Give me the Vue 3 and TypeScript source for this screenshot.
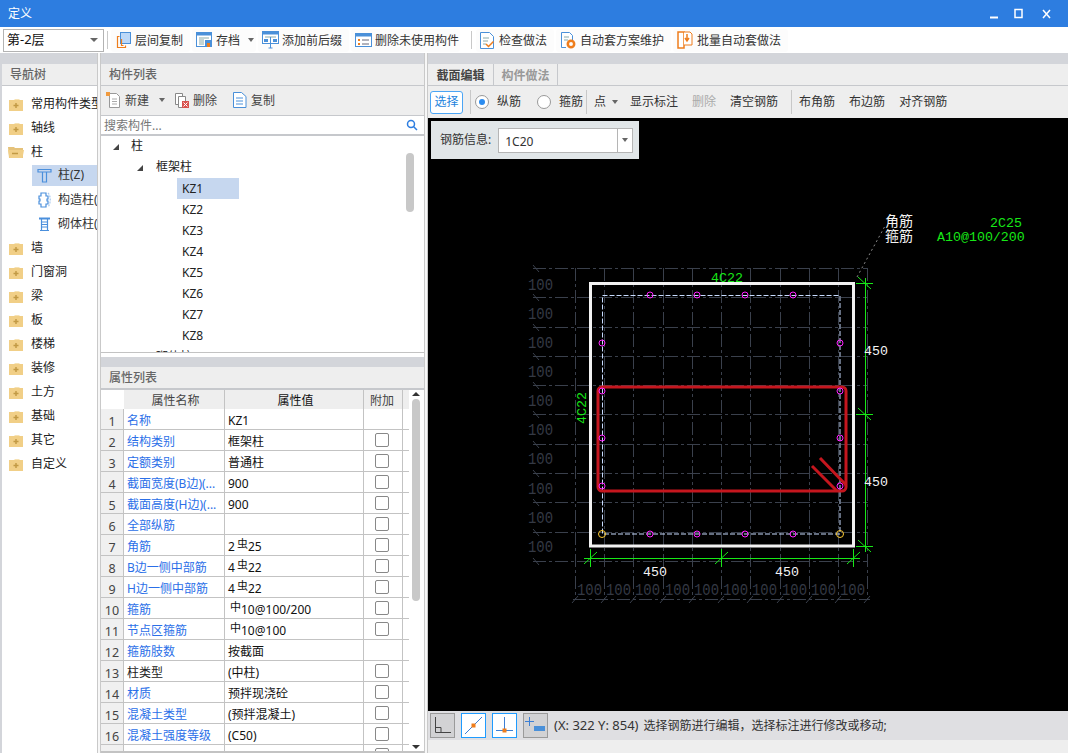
<script setup lang="ts">
const navTop = ['常用构件类型', '轴线']
const navRest = ['墙', '门窗洞', '梁', '板', '楼梯', '装修', '土方', '基础', '其它', '自定义']
const kz = ['KZ1', 'KZ2', 'KZ3', 'KZ4', 'KZ5', 'KZ6', 'KZ7', 'KZ8']

interface Row { n: number; name: string; blue: boolean; pre: string; sym: string; post: string; chk: boolean }
const mk = (n: number, name: string, pre: string, sym = '', post = '', chk = true, blue = true): Row => ({ n, name, blue, pre, sym, post, chk })
const rows: Row[] = [
  mk(1, '名称', 'KZ1', '', '', false),
  mk(2, '结构类别', '框架柱'),
  mk(3, '定额类别', '普通柱'),
  mk(4, '截面宽度(B边)(...', '900'),
  mk(5, '截面高度(H边)(...', '900'),
  mk(6, '全部纵筋', ''),
  mk(7, '角筋', '2', '虫', '25'),
  mk(8, 'B边一侧中部筋', '4', '虫', '22'),
  mk(9, 'H边一侧中部筋', '4', '虫', '22'),
  mk(10, '箍筋', '', '中', '10@100/200'),
  mk(11, '节点区箍筋', '', '中', '10@100'),
  mk(12, '箍筋肢数', '按截面', '', '', false),
  mk(13, '柱类型', '(中柱)', '', '', true, false),
  mk(14, '材质', '预拌现浇砼'),
  mk(15, '混凝土类型', '(预拌混凝土)'),
  mk(16, '混凝土强度等级', '(C50)'),
  mk(17, '', ''),
]

const hY = [268, 297, 327, 356, 385, 414, 444, 473, 502, 532, 561]
const vX = [575, 604, 633, 663, 692, 721, 750, 780, 809, 838, 867]
const leftLabels = [285, 314, 343, 372, 401, 430, 459, 489, 518, 547]
const topDots = [650, 697, 745, 793]
const sideDots = [343, 391, 438, 486]
const bottomLabels = [590, 619, 648, 678, 707, 736, 765, 795, 824, 853]
</script>

<template>
  <div class="app">
    <header class="title">
      <span class="title-text">定义</span>
      <div class="win">
        <svg width="70" height="14" viewBox="0 0 70 14">
          <path d="M0 10.500h8" stroke="#fff" stroke-width="2" />
          <rect x="25" y="2.500" width="7" height="8" fill="none" stroke="#fff" stroke-width="1.500" />
          <path d="M53 3l7 8M60 3l-7 8" stroke="#fff" stroke-width="1.500" />
        </svg>
      </div>
    </header>

    <div class="toolbar">
      <div class="floor"><span>第-2层</span><i class="arrow"></i></div>
      <i class="sep"></i>
      <div class="tbtn b1">
        <svg width="16" height="18" viewBox="0 0 16 18"><rect x="4.500" y="1.500" width="10" height="11" fill="#bcd8f8" stroke="#4a90d9" /><path d="M3.500 5.500h-2v11h8v-2M5.500 8v6.500h2" fill="none" stroke="#ee7d1c" stroke-width="1.200" /></svg>
        <span>层间复制</span>
      </div>
      <div class="tbtn b2">
        <svg width="17" height="16" viewBox="0 0 17 16"><rect x=".5" y=".5" width="15" height="14" fill="#fff" stroke="#4a90d9" /><rect x=".5" y=".5" width="15" height="3" fill="#4a90d9" /><path d="M3 6h10M3 8h5M3 10h5M3 12h5" stroke="#8aa" /><rect x="9" y="8" width="7" height="7" fill="#4a90d9" /><rect x="11" y="11" width="3" height="4" fill="#ee7d1c" /></svg>
        <span>存档</span><i class="arrow small"></i>
      </div>
      <div class="tbtn b3">
        <svg width="17" height="18" viewBox="0 0 17 18"><rect x=".5" y=".5" width="16" height="12" fill="#fff" stroke="#4a90d9" /><rect x=".5" y=".5" width="16" height="3" fill="#4a90d9" /><path d="M3 6h11" stroke="#8aa" /><rect x="2" y="8" width="4" height="3" fill="#4a90d9" /><rect x="11" y="8" width="4" height="3" fill="#4a90d9" /><path d="M8.500 6v11M6.500 17h4" stroke="#4a90d9" /></svg>
        <span>添加前后缀</span>
      </div>
      <div class="tbtn b4">
        <svg width="17" height="14" viewBox="0 0 17 14"><rect x=".5" y=".5" width="16" height="13" fill="#fff" stroke="#4a90d9" /><rect x=".5" y=".5" width="16" height="3" fill="#4a90d9" /><path d="M3 6l2 2M5 6l-2 2M3 10l2 2M5 10l-2 2" stroke="#ee7d1c" /><path d="M7 7h7M7 11h7" stroke="#667" /></svg>
        <span>删除未使用构件</span>
      </div>
      <i class="sep s2"></i>
      <div class="tbtn b5">
        <svg width="14" height="17" viewBox="0 0 14 17"><path d="M.5.5h9l4 4v12H.5z" fill="#fff" stroke="#4a90d9" /><path d="M3 6h6M3 9h5M3 12h3" stroke="#8aa" /><path d="M6 12l2.500 2.500 5-5" fill="none" stroke="#ee7d1c" stroke-width="1.500" /></svg>
        <span>检查做法</span>
      </div>
      <div class="tbtn b6">
        <svg width="15" height="17" viewBox="0 0 15 17"><path d="M.5.5h8l3 3v5M5 15.500H.5V.5" fill="#fff" stroke="#4a90d9" /><path d="M3 5h5M3 8h4" stroke="#8aa" /><circle cx="10" cy="12" r="3.200" fill="none" stroke="#ee7d1c" stroke-width="2.500" /></svg>
        <span>自动套方案维护</span>
      </div>
      <div class="tbtn b7">
        <svg width="16" height="18" viewBox="0 0 16 18"><path d="M1 1h6v16H1z" fill="#fff" stroke="#ee7d1c" stroke-width="1.500" /><path d="M7 1h6l2 2v11H7" fill="#fff" stroke="#ee7d1c" /><path d="M10 3v6M8 7l2 3 2-3" fill="none" stroke="#ee7d1c" stroke-width="1.500" /></svg>
        <span>批量自动套做法</span>
      </div>
    </div>

    <div class="main">
      <aside class="nav">
        <div class="phead">导航树</div>
        <div class="nav-body">
          <div v-for="t in navTop" :key="t" class="nrow"><svg class="fold" viewBox="0 0 14 14"><path d="M0 3h14v11H0z" fill="#f1cf87" /><path d="M0 3h5l1-1h4l1 1" fill="#f6e2b4" /><path d="M7 6v5M4.500 8.500h5" stroke="#c29a45" stroke-width="1.500" /></svg><span>{{ t }}</span></div>
          <div class="nrow"><svg class="fold open" viewBox="0 0 16 13"><path d="M0 1h6l1 1h8v10H1z" fill="#e5c27a" /><path d="M0 4h16l-1.500 8H1.500z" fill="#f1cf87" /><path d="M4 7.500h6" stroke="#c29a45" stroke-width="1.500" /></svg><span>柱</span></div>
          <div class="nsub active"><svg width="15" height="15" viewBox="0 0 15 15" fill="none" stroke="#4a8fdc" stroke-width="1.200"><path d="M1 1.500h13v2.500H1zM5.500 4v10h4V4" /></svg><span>柱(Z)</span></div>
          <div class="nsub"><svg width="15" height="16" viewBox="0 0 15 16" fill="none" stroke="#4a8fdc" stroke-width="1.200"><path d="M4 1h5v3h2v3h-1v2h1v3H9v3H4v-3H2V9h1V7H2V4h2z" /><path d="M11 1c3 3 3 10 0 14" stroke="#a9c9ee" stroke-dasharray="2 1" /></svg><span>构造柱(</span></div>
          <div class="nsub"><svg width="15" height="15" viewBox="0 0 15 15" fill="none" stroke="#4a8fdc" stroke-width="1.200"><path d="M2 1.500h11" stroke-width="2" /><path d="M3 13.500h9M4.500 2v11.500h6V2M4.500 5h6M4.500 7.500h6M4.500 10h6" /></svg><span>砌体柱(</span></div>
          <div v-for="t in navRest" :key="t" class="nrow"><svg class="fold" viewBox="0 0 14 14"><path d="M0 3h14v11H0z" fill="#f1cf87" /><path d="M0 3h5l1-1h4l1 1" fill="#f6e2b4" /><path d="M7 6v5M4.500 8.500h5" stroke="#c29a45" stroke-width="1.500" /></svg><span>{{ t }}</span></div>
        </div>
      </aside>

      <div class="vsplit"></div>

      <section class="center">
        <div class="list-panel">
          <div class="phead">构件列表</div>
          <div class="list-tools">
            <div class="lt t1"><svg width="15" height="16" viewBox="0 0 15 16"><path d="M3.500 1.500h7l3 3v11h-10z" fill="#fff" stroke="#999" /><path d="M6 7h5M6 9.500h5M6 12h5" stroke="#aaa" /><path d="M0 0h4v4H0z" fill="#f09a3e" /></svg><span>新建</span><i class="arrow small"></i></div>
            <div class="lt t2"><svg width="15" height="16" viewBox="0 0 15 16"><path d="M1.500 1.500h7v11h-7z" fill="#fff" stroke="#888" /><path d="M4.500 4.500h7v11h-7z" fill="#fff" stroke="#888" /><rect x="8" y="9" width="7" height="7" fill="#d9534f" /><path d="M9.500 10.500l4 4M13.500 10.500l-4 4" stroke="#fff" /></svg><span>删除</span></div>
            <div class="lt t3"><svg width="14" height="16" viewBox="0 0 14 16"><path d="M.5.500h8l4.500 4v11H.5z" fill="#fff" stroke="#4a90d9" /><path d="M3 6h7M3 9h7M3 12h7" stroke="#4a90d9" /></svg><span>复制</span></div>
          </div>
          <div class="search">
            <span>搜索构件...</span>
            <svg width="12" height="12" viewBox="0 0 12 12" fill="none" stroke="#2d7de0" stroke-width="1.500"><circle cx="5" cy="5" r="3.500" /><path d="M7.500 7.500l3.500 3.500" /></svg>
          </div>
          <div class="tree">
            <div class="troot"><i class="tri"></i><span>柱</span></div>
            <div class="tsub"><i class="tri"></i><span>框架柱</span></div>
            <div v-for="(k, i) in kz" :key="k" class="tleaf"><span :class="{ sel: i === 0 }">{{ k }}</span></div>
            <div class="tcut"><span>砌体柱</span></div>
            <div class="tbar"></div>
          </div>
        </div>
        <div class="hsplit"></div>

        <div class="prop-panel">
          <div class="phead">属性列表</div>
          <div class="prop-body">
            <div class="ptable">
              <div class="pr head">
                <div class="c0 blank"></div>
                <div class="c1">属性名称</div>
                <div class="c2">属性值</div>
                <div class="c3">附加</div>
                <div class="c4"></div>
              </div>
              <div v-for="r in rows" :key="r.n" class="pr">
                <div class="c0">{{ r.n }}</div>
                <div class="c1" :class="{ blue: r.blue }">{{ r.name }}</div>
                <div class="c2">{{ r.pre }}<span v-if="r.sym" class="sym">{{ r.sym }}</span>{{ r.post }}</div>
                <div class="c3"><i v-if="r.chk" class="chk"></i></div>
              </div>
            </div>
            <div class="pscroll">
              <i class="up"></i>
              <div class="thumb"></div>
              <i class="down"></i>
            </div>
          </div>
        </div>
      </section>

      <div class="vsplit"></div>

      <section class="right">
        <div class="tabs">
          <div class="tab on">截面编辑</div>
          <div class="tab">构件做法</div>
        </div>
        <div class="rtools">
          <div class="pick">选择</div>
          <i class="rsep r1"></i>
          <i class="radio checked"></i><span class="rt a1">纵筋</span>
          <i class="radio r2"></i><span class="rt a1">箍筋</span>
          <i class="rsep r3"></i>
          <span class="rt a3">点</span><i class="arrow small a4"></i>
          <span class="rt a5">显示标注</span>
          <span class="rt a6">删除</span>
          <span class="rt a7">清空钢筋</span>
          <i class="rsep r8"></i>
          <span class="rt a9">布角筋</span>
          <span class="rt a10">布边筋</span>
          <span class="rt a10">对齐钢筋</span>
        </div>
        <div class="canvas">
          <svg class="cad" viewBox="428 118 640 594" width="640" height="594">
            <g stroke="#3a404c" stroke-width="1" stroke-dasharray="13 3 3 3" fill="none">
              <path v-for="y in hY" :key="'h' + y" :d="`M533 ${y + 0.5}H868`" />
              <path v-for="x in vX" :key="'v' + x" :d="`M${x + 0.5} 268V600`" />
              <path d="M573 599.500H870" />
            </g>
            <g stroke="#3a404c" stroke-width="1" fill="none">
              <path v-for="y in hY" :key="'ht' + y" :d="`M533 ${y - 3}l6 7`" />
              <path v-for="x in vX" :key="'vt' + x" :d="`M${x - 3} 603l6 -7`" />
            </g>
            <g class="grid-text">
              <text v-for="y in leftLabels" :key="'l' + y" x="528" :y="y + 5" textLength="25" lengthAdjust="spacingAndGlyphs">100</text>
              <text v-for="x in bottomLabels" :key="'b' + x" :x="x - 13" y="595" textLength="25" lengthAdjust="spacingAndGlyphs">100</text>
            </g>

            <path d="M857 277L885 226" stroke="#8a8a8a" stroke-dasharray="2 3" fill="none" />
            <rect x="590.500" y="283.500" width="263" height="262.500" fill="none" stroke="#f2f2f2" stroke-width="3" />
            <rect x="602.500" y="295.500" width="237.500" height="238.500" fill="none" stroke="#c8dcff" stroke-dasharray="5 2" />
            <rect x="598" y="387" width="248" height="104" rx="4" fill="none" stroke="#c5161e" stroke-width="3" />
            <path d="M812 466l25 25M820 458l26 27" stroke="#c5161e" stroke-width="3" fill="none" />

            <g fill="none" stroke="#ff20ff">
              <circle v-for="x in topDots" :key="'t' + x" :cx="x" cy="295" r="3" />
              <circle v-for="x in topDots" :key="'u' + x" :cx="x" cy="534" r="3" />
              <circle v-for="y in sideDots" :key="'s' + y" cx="602" :cy="y" r="3" />
              <circle v-for="y in sideDots" :key="'r' + y" cx="840" :cy="y" r="3" />
            </g>
            <g fill="none" stroke="#ffcc33">
              <circle cx="602" cy="534" r="3.500" />
              <circle cx="840" cy="534" r="3.500" />
            </g>

            <g stroke="#17e817" stroke-width="1" fill="none">
              <path d="M865.500 278V552" />
              <path d="M856 283.500H873M856 414.500H873M856 546.500H873" />
              <path d="M858 277l13 12M858 408l13 12M858 540l13 12" />
              <path d="M584 558.500H860" />
              <path d="M590.500 549V567M721.500 549V567M853.500 549V567" />
              <path d="M584 564l13 -12M715 564l13 -12M847 564l13 -12" />
            </g>

            <g class="cad-text white">
              <text x="643" y="576">450</text>
              <text x="775" y="576">450</text>
              <text x="864" y="355">450</text>
              <text x="864" y="486">450</text>
            </g>
            <g class="cad-text green">
              <text x="711" y="282">4C22</text>
              <text transform="translate(586 424) rotate(-90)">4C22</text>
              <text x="990" y="227">2C25</text>
              <text x="937" y="241">A10@100/200</text>
            </g>
            <g class="cad-text cjk white">
              <text x="885" y="226">角筋</text>
              <text x="885" y="241">箍筋</text>
            </g>
          </svg>

          <div class="info">
            <span>钢筋信息:</span>
            <div class="combo"><span class="cv">1C20</span><span class="cb"><i class="arrow small"></i></span></div>
          </div>
        </div>
        <div class="status">
          <div class="sb"><svg width="19" height="19" viewBox="0 0 19 19" fill="none" stroke="#444"><path d="M2.500 1v15.500H18M2.500 11.500H8v5" /></svg></div>
          <div class="sb on"><svg width="19" height="19" viewBox="0 0 19 19"><path d="M1 18L18 1" stroke="#3c7fd5" /><rect x="7.500" y="7.500" width="4" height="4" fill="#ee7d1c" /></svg></div>
          <div class="sb on"><svg width="19" height="19" viewBox="0 0 19 19"><path d="M9.500 1V14M1 14.500H18" stroke="#3c7fd5" /><rect x="7.500" y="12.500" width="4" height="4" fill="#ee7d1c" /></svg></div>
          <div class="sb"><svg width="21" height="19" viewBox="0 0 21 19"><path d="M4.500 1v9M0 5.500h9" stroke="#3c7fd5" /><rect x="9" y="10" width="11" height="5" fill="#4a90d9" /></svg></div>
          <span class="msg"><span class="xy">(X: 322 Y: 854)</span>选择钢筋进行编辑，选择标注进行修改或移动;</span>
        </div>
        <div class="foot"></div>
      </section>
    </div>
  </div>
</template>

<style>
html, body { margin: 0; overflow: hidden; background: #fff; }
</style>

<style scoped>
.app {
  width: 1068px; height: 753px; display: flex; flex-direction: column;
  font: 12px/1.2 "Noto Sans", "Noto Sans CJK SC", sans-serif; color: #222; overflow: hidden;
}
i { display: block; font-style: normal; }
.title { height: 27px; background: #2d7de0; color: #fff; display: flex; align-items: center; justify-content: space-between; padding-left: 8px; flex: none; }
.title-text { padding-top: 2px; }
.win { padding-right: 8px; display: flex; }
.toolbar { height: 26px; flex: none; background: #fff; display: flex; align-items: center; box-sizing: border-box; padding-left: 3px; }
.floor { width: 101px; height: 23px; flex: none; box-sizing: border-box; border: 1px solid #b3b3b3; display: flex; align-items: center; justify-content: space-between; padding: 0 5px 0 3px; color: #111; font-size: 13px; }
.arrow { width: 0; height: 0; border-left: 4px solid transparent; border-right: 4px solid transparent; border-top: 4px solid #666; flex: none; }
.arrow.small { border-left-width: 3px; border-right-width: 3px; }
.sep { width: 1px; height: 18px; background: #c8c8c8; margin: 0 3px; flex: none; }
.tbtn { height: 23px; flex: none; display: flex; align-items: center; white-space: nowrap; gap: 3px; background: #fcfcfc; border-radius: 3px; box-sizing: border-box; padding-left: 4px; color: #333; margin-right: 2px; }
.tbtn span { padding-top: 2px; }
.tbtn svg { flex: none; }
.b1 { width: 79px; padding-left: 5px; }
.b2 { width: 64px; } .b2 .arrow { margin-left: 5px; }
.b3 { width: 91px; }
.b4 { width: 109px; }
.b5 { width: 78px; gap: 5px; }
.b6 { width: 115px; gap: 4px; padding-left: 5px; }
.b7 { width: 115px; gap: 4px; }
.s2 { margin: 0 4px 0 9px; }

.main { flex: 1; min-height: 0; display: flex; background: #d3d5da; padding: 11px 0 0 2px; box-sizing: border-box; }
.phead { flex: none; background: #eeeeee; color: #666; font-weight: 500; display: flex; align-items: center; padding: 2px 0 0 8px; border-bottom: 2px solid #c6c8cc; box-sizing: border-box; height: 23px; }
.nav { width: 95px; flex: none; background: #fff; display: flex; flex-direction: column; overflow: hidden; }
.nav .phead { height: 22px; border-bottom-width: 1px; }
.nav-body { padding-top: 6px; }
.nrow { height: 24px; display: flex; align-items: center; white-space: nowrap; color: #222; padding-left: 7px; overflow: hidden; }
.fold { width: 14px; height: 14px; flex: none; margin-right: 8px; }
.fold.open { width: 16px; height: 13px; margin-left: -1px; margin-right: 7px; }
.nsub { height: 24px; display: flex; align-items: center; margin-left: 30px; padding-left: 5px; white-space: nowrap; overflow: hidden; gap: 6px; color: #333; }
.nsub svg { flex: none; }
.nsub.active { background: #c6d7ef; height: 21px; margin-top: 1px; margin-bottom: 2px; }

.vsplit { width: 4px; flex: none; margin-top: -11px; background: #f7f7f7; border-left: 1px solid #c9c9c9; border-right: 1px solid #c9c9c9; box-sizing: border-box; }
.center { width: 323px; flex: none; display: flex; flex-direction: column; }
.hsplit { height: 14px; flex: none; box-sizing: border-box; border-top: 4px solid #fff; }
.list-panel { height: 289px; flex: none; display: flex; flex-direction: column; background: #fff; border-bottom: 1px solid #c3c3c3; box-sizing: border-box; }
.list-panel .phead { height: 22px; border-bottom-width: 1px; }
.list-tools { height: 30px; flex: none; box-sizing: border-box; background: #eeeeee; display: flex; align-items: center; border-bottom: 1px solid #c6c8cc; }
.lt { display: flex; align-items: center; gap: 4px; color: #444; }
.lt span { padding-top: 2px; }
.t1 { margin-left: 5px; }
.t1 .arrow { margin-left: 6px; }
.t2 { margin-left: 9px; }
.t3 { margin-left: 16px; }
.search { height: 20px; flex: none; box-sizing: border-box; display: flex; align-items: center; justify-content: space-between; padding: 0 6px 0 3px; color: #777; border-bottom: 2px solid #c6c8cc; background: #fff; }
.search span { padding-top: 2px; }
.tree { flex: 1; min-height: 0; position: relative; overflow: hidden; color: #222; }
.troot, .tsub { height: 21px; display: flex; align-items: center; }
.tri { width: 0; height: 0; border-style: solid; border-width: 0 0 6px 6px; border-color: transparent transparent #444 transparent; }
.troot .tri { margin-left: 12px; margin-right: 12px; }
.tsub .tri { margin-left: 36px; margin-right: 13px; }
.tleaf { height: 21px; padding-left: 76px; display: flex; }
.tleaf span { width: 57px; padding-left: 5px; line-height: 21px; }
.tleaf .sel { background: #c6d7ef; }
.tcut { height: 21px; line-height: 21px; padding-left: 55px; }
.tbar { position: absolute; left: 305px; top: 17px; width: 8px; height: 59px; background: #c8c8c8; border-radius: 4px; }
.prop-panel { flex: 1; min-height: 0; display: flex; flex-direction: column; background: #fff; border-bottom: 2px solid #c3c3c3; overflow: hidden; }
.prop-body { flex: 1; min-height: 0; display: flex; overflow: hidden; }
.ptable { width: 308px; flex: none; }
.pr { display: flex; height: 21px; box-sizing: border-box; border-bottom: 1px solid #c3c3c3; align-items: stretch; }
.pr.head { height: 19px; border-bottom: 0; background: #eee; color: #444; text-align: center; }
.pr.head > div { justify-content: center; }
.pr > div { display: flex; align-items: center; box-sizing: border-box; white-space: nowrap; overflow: hidden; padding-top: 4px; }
.c0 { width: 23px; background: #f0f0f0; color: #444; justify-content: center; border-right: 1px solid #c3c3c3; font-size: 12.500px; flex: none; }
.c0.blank { background: #fff; border-right: 0; }
.c1 { width: 101px; padding-left: 3px; border-right: 1px solid #c3c3c3; flex: none; }
.blue { color: #2b6fe8; }
.c2 { width: 139px; padding-left: 3px; border-right: 1px solid #c3c3c3; color: #111; flex: none; }
.c3 { width: 39px; justify-content: center; border-right: 1px solid #c3c3c3; flex: none; }
.pr > .c3 { padding: 0 2px 0 0; }
.pr.head > .c3 { padding-top: 4px; }
.c4 { width: 6px; flex: none; }
.sym { font-size: 11px; position: relative; top: -3px; margin: 0 0 0 2px; }
.chk { width: 14px; height: 14px; box-sizing: border-box; border: 1px solid #888; border-radius: 2px; background: #fff; }
.pscroll { width: 15px; position: relative; flex: 1; }
.pscroll .thumb { position: absolute; left: 3px; top: 9px; width: 8px; height: 202px; background: #c8c8c8; border-radius: 4px; }
.up, .down { position: absolute; left: 3px; width: 0; height: 0; border-left: 4px solid transparent; border-right: 4px solid transparent; }
.up { top: 2px; border-bottom: 4px solid #333; }
.down { bottom: 2px; border-top: 4px solid #333; }

.right { flex: 1; min-width: 0; display: flex; flex-direction: column; }
.tabs { height: 22px; flex: none; box-sizing: border-box; background: #eeeeee; display: flex; border-bottom: 1px solid #c6c8cc; }
.tab { width: 64px; text-align: center; line-height: 23px; color: #999; font-weight: 700; border-right: 1px solid #c6c8cc; box-sizing: border-box; }
.tab.on { color: #444; width: 66px; }
.rtools { height: 32px; flex: none; background: #eeeeee; display: flex; align-items: center; padding-left: 2px; color: #333; }
.pick { width: 33px; height: 23px; box-sizing: border-box; border: 1px solid #4ba5f5; border-radius: 3px; background: #fff; color: #1d83dd; display: flex; align-items: center; justify-content: center; }
.rsep { width: 1px; height: 24px; background: #c8c8c8; }
.r1 { margin: 0 1px 0 7px; }
.radio { width: 14px; height: 14px; margin-left: 3px; box-sizing: border-box; border: 1px solid #999; border-radius: 50%; background: #fff; position: relative; }
.radio.checked::after { content: ""; position: absolute; left: 3px; top: 3px; width: 6px; height: 6px; border-radius: 50%; background: #2b8cf0; }
.radio.r2 { margin-left: 16px; }
.rt { white-space: nowrap; }
.a1 { margin-left: 8px; }
.r3 { margin-left: 3px; }
.a3 { margin-left: 7px; }
.a4 { margin-left: 6px; }
.a5 { margin-left: 12px; }
.a6 { margin-left: 14px; color: #aaa; }
.a7 { margin-left: 14px; }
.r8 { margin-left: 13px; }
.a9 { margin-left: 7px; }
.a10 { margin-left: 14px; }
.canvas { height: 593px; flex: none; background: #000; position: relative; overflow: hidden; }
.cad { display: block; }
.grid-text text { fill: #343944; font: 16px "Liberation Mono", monospace; }
.cad-text text { font: 13.300px "Liberation Mono", monospace; }
.white text { fill: #f4f4f4; }
.green text { fill: #17e817; }
.cjk text { font: 14px "Noto Sans CJK SC", sans-serif; }
.info { position: absolute; left: 3px; top: 3px; width: 208px; height: 38px; background: #e1e6e8; display: flex; align-items: center; box-sizing: border-box; padding-left: 9px; color: #333; gap: 7px; }
.combo { width: 135px; height: 25px; box-sizing: border-box; border: 1px solid #b5b5b5; background: #fff; display: flex; }
.cv { flex: 1; padding-left: 6px; line-height: 25px; }
.cb { width: 14px; border-left: 1px solid #b5b5b5; display: flex; align-items: center; justify-content: center; }
.status { height: 29px; flex: none; background: #dfdfe2; display: flex; align-items: center; padding-left: 2px; gap: 6px; }
.sb { width: 25px; height: 25px; box-sizing: border-box; background: #d2d2d4; border: 1px solid #9a9a9a; display: flex; align-items: center; justify-content: center; }
.sb.on { background: #fff; border-color: #1e9bff; }
.msg { font-size: 12px; color: #333; white-space: nowrap; }
.xy { font-size: 13px; margin-right: 5px; }
.foot { flex: 1; background: #eeeeee; }
</style>
